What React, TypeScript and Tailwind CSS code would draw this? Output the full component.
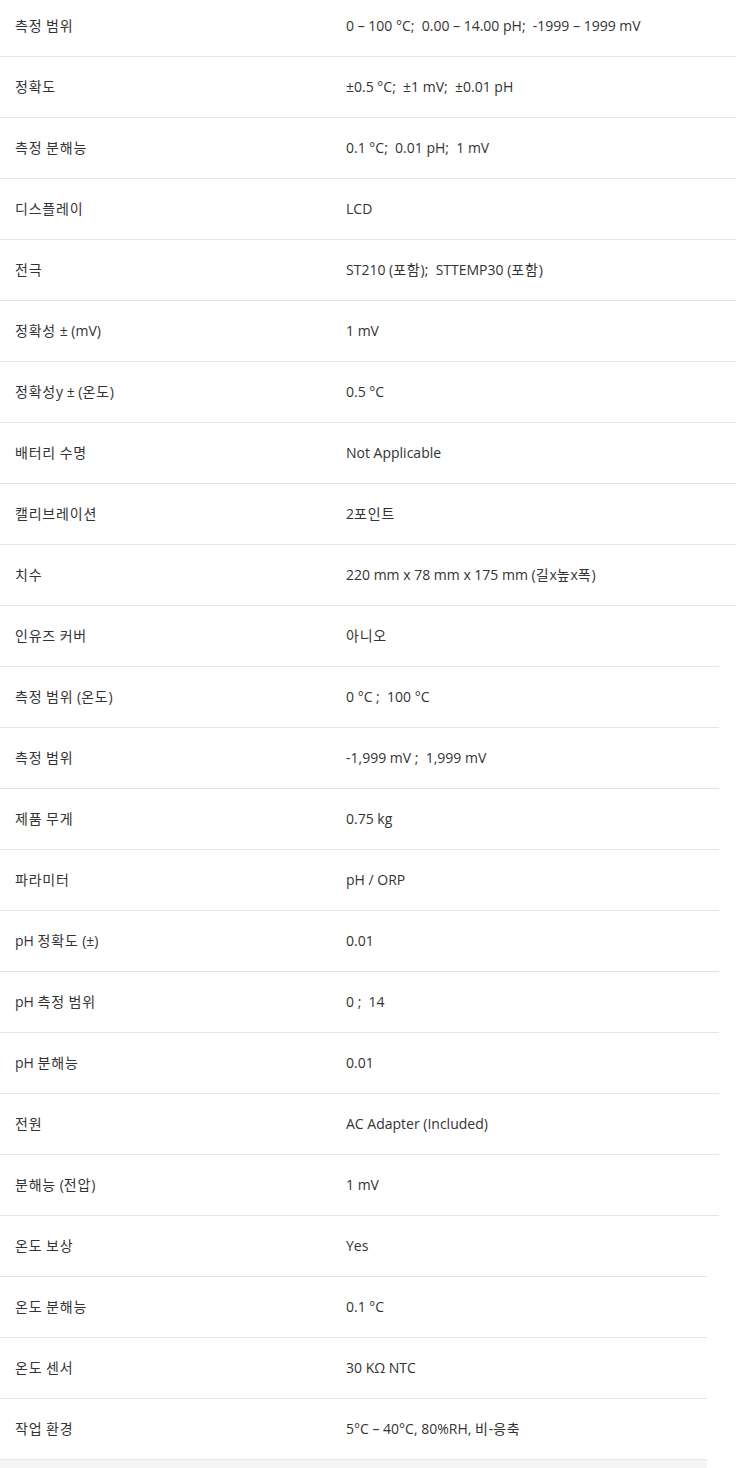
import React from "react";

const rows: [string, string, number][] = [
  ["측정 범위", "0 – 100 °C;\u00a0 0.00 – 14.00 pH;\u00a0 -1999 – 1999 mV", 736],
  ["정확도", "±0.5 °C;\u00a0 ±1 mV;\u00a0 ±0.01 pH", 736],
  ["측정 분해능", "0.1 °C;\u00a0 0.01 pH;\u00a0 1 mV", 736],
  ["디스플레이", "LCD", 736],
  ["전극", "ST210 (포함);\u00a0 STTEMP30 (포함)", 736],
  ["정확성 ± (mV)", "1 mV", 736],
  ["정확성y ± (온도)", "0.5 °C", 736],
  ["배터리 수명", "Not Applicable", 736],
  ["캘리브레이션", "2포인트", 736],
  ["치수", "220 mm x 78 mm x 175 mm (길x높x폭)", 736],
  ["인유즈 커버", "아니오", 719],
  ["측정 범위 (온도)", "0 °C ;\u00a0 100 °C", 719],
  ["측정 범위", "-1,999 mV ;\u00a0 1,999 mV", 719],
  ["제품 무게", "0.75 kg", 719],
  ["파라미터", "pH / ORP", 719],
  ["pH 정확도 (±)", "0.01", 719],
  ["pH 측정 범위", "0 ;\u00a0 14", 719],
  ["pH 분해능", "0.01", 719],
  ["전원", "AC Adapter (Included)", 719],
  ["분해능 (전압)", "1 mV", 719],
  ["온도 보상", "Yes", 707],
  ["온도 분해능", "0.1 °C", 707],
  ["온도 센서", "30 KΩ NTC", 707],
  ["작업 환경", "5°C – 40°C, 80%RH, 비-응축", 707],
];

function Txt({ s }: { s: string }) {
  const parts = s.split(/([\uAC00-\uD7A3]+)/);
  return (
    <>
      {parts.map((p, i) =>
        /[\uAC00-\uD7A3]/.test(p) ? (
          <span key={i} className="tracking-[0.8px]">
            {p}
          </span>
        ) : (
          <span key={i}>{p}</span>
        )
      )}
    </>
  );
}

export default function App() {
  return (
    <div
      className="w-[736px] h-[1468px] overflow-hidden bg-white text-[14px] text-[#333]"
      style={{ fontFamily: '"Open Sans", "Noto Sans CJK KR", sans-serif' }}
    >
      <div className="-mt-[4px] flex flex-col">
        {rows.map(([k, v, w], i) => (
          <div key={i} className="h-[61px] flex flex-col">
            <div className="flex-1 flex items-center pb-[1px]">
              <div className="w-[346px] pl-[15px] shrink-0">
                <Txt s={k} />
              </div>
              <div>
                <Txt s={v} />
              </div>
            </div>
            <div className="h-px bg-[#e6e6e6]" style={{ width: w }} />
          </div>
        ))}
        <div className="h-[10px] w-[707px] bg-[#f5f5f5]" />
      </div>
    </div>
  );
}
